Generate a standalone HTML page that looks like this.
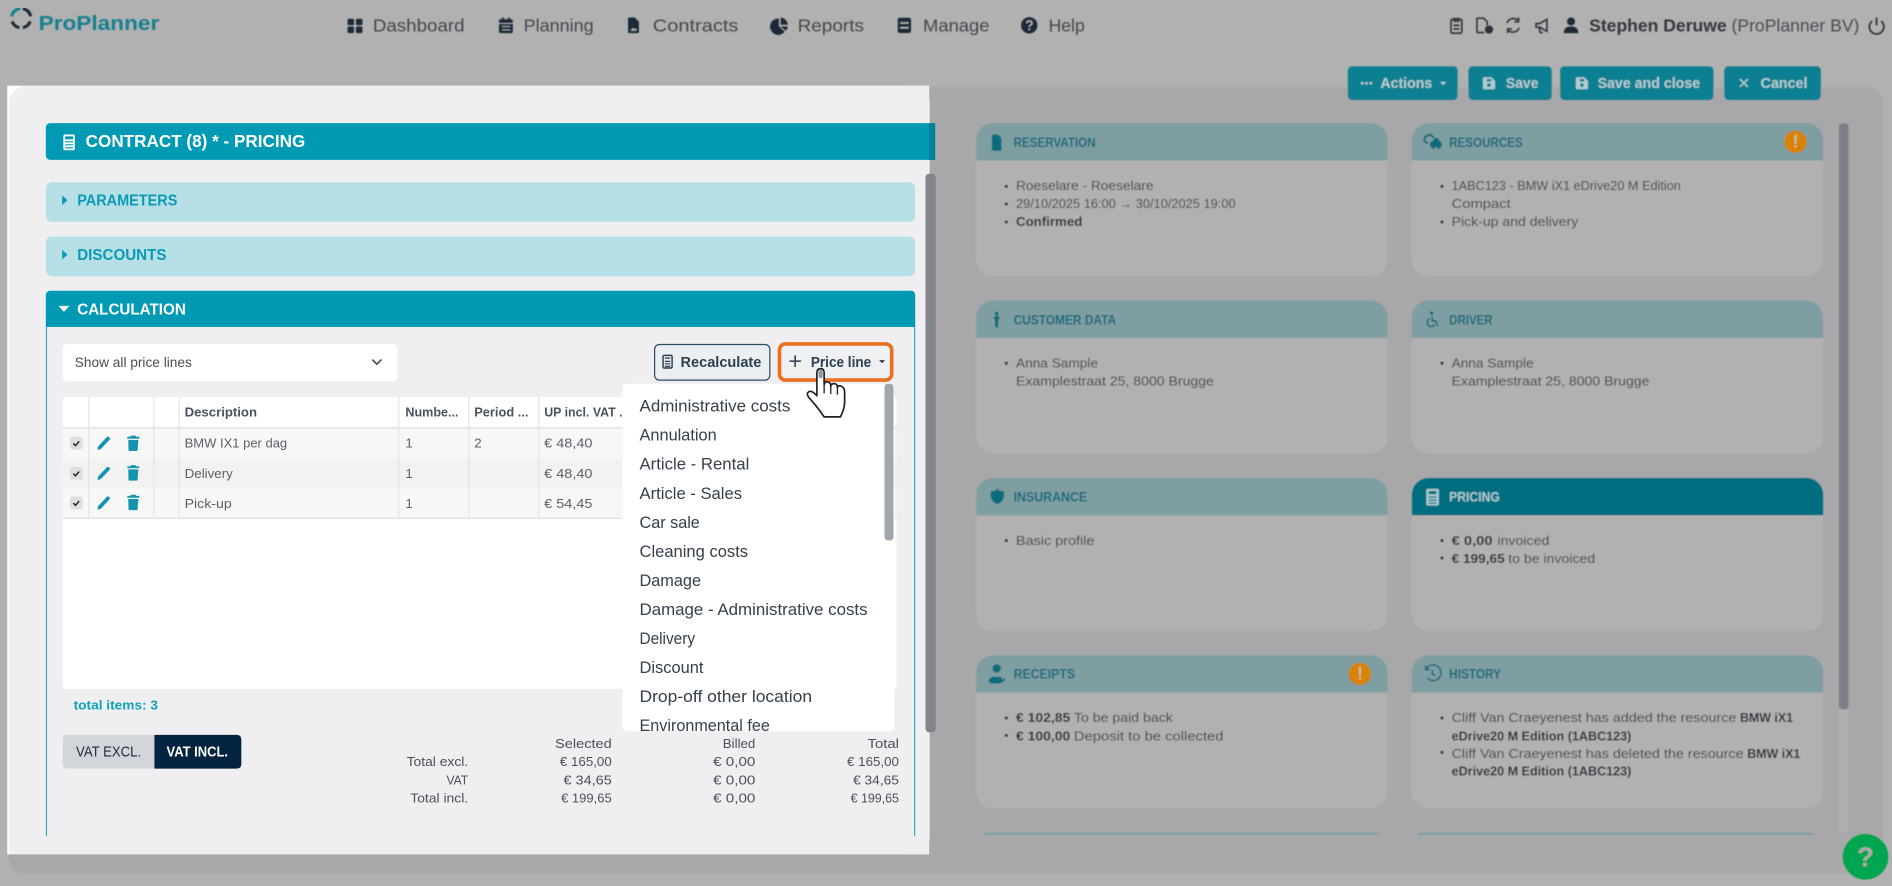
<!DOCTYPE html>
<html><head><meta charset="utf-8"><title>ProPlanner</title>
<style>
html,body{margin:0;padding:0;width:1892px;height:886px;overflow:hidden;background:#b1b1b1}
svg{display:block}
text{font-family:"Liberation Sans","DejaVu Sans",sans-serif;font-size:11px}
.dim{fill:#3f4349}
.dimb{fill:#2c3038;font-weight:700}
.ch{fill:#0f6c7c;font-weight:700;font-size:11.5px}
.bt{fill:#b4ccd1;font-weight:700;font-size:12.5px}
.dd{fill:#36404a;font-size:13.5px}
.th{fill:#4a5460;font-weight:700;font-size:11px}
.td{fill:#5a6068;font-size:11px}
.tt{fill:#4c5058;font-size:11px}
</style></head><body>
<svg xmlns="http://www.w3.org/2000/svg" width="1892" height="886" viewBox="0 0 1568 734.27">
<defs><filter id="bl" x="0" y="0" width="100%" height="100%"><feGaussianBlur stdDeviation="0.35"/></filter></defs>

<rect width="1568" height="735" fill="#b1b1b1"/>

<g filter="url(#bl)">
<!-- content panel -->
<rect x="7" y="72" width="1554" height="652" rx="14" fill="#a8a8aa"/>

<!-- logo -->
<path d="M9.6 13.600A8 8 0 0 1 16.800 7" fill="none" stroke="#0f8093" stroke-width="2.500"/>
<path d="M18.900 7.100A8 8 0 0 1 25.400 13.600" fill="none" stroke="#1d2836" stroke-width="2.500"/>
<path d="M25 17.700A8 8 0 0 1 18.900 22.900M16.100 22.900A8 8 0 0 1 10 17.700" fill="none" stroke="#1d2836" stroke-width="2.500"/>
<text x="32" y="25" textLength="100" lengthAdjust="spacingAndGlyphs" style="font-size:17px;font-weight:700;fill:#13808f">ProPlanner</text>

<!-- nav -->
<g fill="#1f2a38">
<rect x="288" y="15.500" width="5.400" height="5.400" rx="1.200"/><rect x="295" y="15.500" width="5.400" height="5.400" rx="1.200"/><rect x="288" y="22" width="5.400" height="5.400" rx="1.200"/><rect x="295" y="22" width="5.400" height="5.400" rx="1.200"/>
<path d="M413.500 17.500q0-1.500 1.500-1.500h1v-1.500h1.500v1.500h3.500v-1.500h1.500v1.500h1q1.500 0 1.500 1.500v1.500h-11.500zM413.500 20h11.500v6q0 1.500-1.500 1.500h-8.500q-1.500 0-1.500-1.500z"/>
<path d="M520.500 15.500q0-1 1-1h4.500l3.500 3.500v8.500q0 1-1 1h-7q-1 0-1-1z"/>
<path d="M645.500 15.300v6.500l4.800 4.500a6.800 6.800 0 1 1-4.800-11zM647 14.500a6.800 6.800 0 0 1 6 6h-6zM647 22h6a6.800 6.800 0 0 1-1.800 3.500z"/>
<path d="M744 16.500q0-1.800 1.800-1.800h7.400q1.800 0 1.800 1.800v9q0 1.800-1.800 1.800h-7.400q-1.800 0-1.800-1.800z"/>
<circle cx="853" cy="21" r="6.800"/>
</g>
<path d="M416 22h7M416 24.800h7" stroke="#b1b1b1" stroke-width=".8"/>
<path d="M746 19h7M746 23h7" stroke="#b1b1b1" stroke-width="1.400"/>
<path d="M522.500 25.500l2-2.500 1.500 1.300 1.500-.8v2z" fill="#b1b1b1"/>
<path d="M850.800 19.300q.3-1.900 2.300-1.900 2.100 0 2.100 1.800 0 1.100-1.200 1.700-1 .5-1 1.400" fill="none" stroke="#b1b1b1" stroke-width="1.200"/><circle cx="853" cy="24.200" r=".8" fill="#b1b1b1"/>

<text x="309" y="26" textLength="76" lengthAdjust="spacingAndGlyphs" style="font-size:14.500px;fill:#43474e">Dashboard</text>
<text x="434" y="26" textLength="58" lengthAdjust="spacingAndGlyphs" style="font-size:14.500px;fill:#43474e">Planning</text>
<text x="541" y="26" textLength="71" lengthAdjust="spacingAndGlyphs" style="font-size:14.500px;fill:#43474e">Contracts</text>
<text x="661" y="26" textLength="55" lengthAdjust="spacingAndGlyphs" style="font-size:14.500px;fill:#43474e">Reports</text>
<text x="765" y="26" textLength="55" lengthAdjust="spacingAndGlyphs" style="font-size:14.500px;fill:#43474e">Manage</text>
<text x="869" y="26" textLength="30" lengthAdjust="spacingAndGlyphs" style="font-size:14.500px;fill:#43474e">Help</text>

<!-- user icons -->
<g fill="none" stroke="#2e333b" stroke-width="1.300">
<rect x="1202.500" y="16" width="9" height="11.500" rx="1.200"/><path d="M1205 15.500h4v2h-4zM1204.500 21h5M1204.500 24h5"/>
<path d="M1230 27h-5q-1 0-1-1v-10q0-1 1-1h4.500l3 3v3"/>
<path d="M1249 19a5.500 5.500 0 0 1 9.500-1.500M1259 23a5.500 5.500 0 0 1-9.500 1.500"/>
<path d="M1273 19.500h3l6-3.500v10l-6-3.500h-3zM1275.500 23l1 4h2"/>
</g>
<circle cx="1234" cy="24.500" r="3.400" fill="#2e333b"/>
<path d="M1258.500 14.500v3.500h-3.500M1249.500 27.500v-3.500h3.500" fill="none" stroke="#2e333b" stroke-width="1.300"/>
<circle cx="1302" cy="17.800" r="3.300" fill="#1f2a38"/><path d="M1296 27.500q0-5.500 6-5.500t6 5.500z" fill="#1f2a38"/>
<text x="1317" y="26" textLength="114" lengthAdjust="spacingAndGlyphs" style="font-size:14.500px;font-weight:700;fill:#34383f">Stephen Deruwe</text>
<text x="1435" y="26" textLength="106" lengthAdjust="spacingAndGlyphs" style="font-size:14.500px;fill:#4a4e55">(ProPlanner BV)</text>
<path d="M1551.500 17.500a6 6 0 1 0 7.500 0M1555.200 14.500v6.500" fill="none" stroke="#2c3038" stroke-width="1.400"/>

<!-- action buttons -->
<g fill="#077f92">
<rect x="1117" y="55" width="91" height="28" rx="3.500"/><rect x="1217" y="55" width="69" height="28" rx="3.500"/><rect x="1293" y="55" width="127" height="28" rx="3.500"/><rect x="1429" y="55" width="80" height="28" rx="3.500"/>
</g>
<g fill="#b4ccd1">
<circle cx="1129" cy="69" r="1.100"/><circle cx="1132.500" cy="69" r="1.100"/><circle cx="1136" cy="69" r="1.100"/>
<path d="M1193.500 68h5l-2.500 2.500z"/>
<path d="M1229 65q0-1 1-1h6l3 3v6q0 1-1 1h-8q-1 0-1-1z"/>
<path d="M1306 65q0-1 1-1h6l3 3v6q0 1-1 1h-8q-1 0-1-1z"/>
</g>
<rect x="1232" y="65.500" width="4" height="2" fill="#077f92"/><circle cx="1234" cy="70.500" r="1.500" fill="#077f92"/>
<rect x="1309" y="65.500" width="4" height="2" fill="#077f92"/><circle cx="1311" cy="70.500" r="1.500" fill="#077f92"/>
<path d="M1442 65.500l6.500 6.500M1448.500 65.500l-6.500 6.500" stroke="#b4ccd1" stroke-width="1.200"/>
<text class="bt" x="1144" y="73" textLength="43" lengthAdjust="spacingAndGlyphs">Actions</text>
<text class="bt" x="1248" y="73" textLength="27" lengthAdjust="spacingAndGlyphs">Save</text>
<text class="bt" x="1324" y="73" textLength="85" lengthAdjust="spacingAndGlyphs">Save and close</text>
<text class="bt" x="1459" y="73" textLength="39" lengthAdjust="spacingAndGlyphs">Cancel</text>

<!-- cards -->
<g id="cards">
<g fill="#b1b1b2">
<rect x="809" y="102" width="341" height="127" rx="14"/><rect x="1170" y="102" width="341" height="127" rx="14"/>
<rect x="809" y="249" width="341" height="127" rx="14"/><rect x="1170" y="249" width="341" height="127" rx="14"/>
<rect x="809" y="396" width="341" height="127" rx="14"/><rect x="1170" y="396" width="341" height="127" rx="14"/>
<rect x="809" y="543" width="341" height="127" rx="14"/><rect x="1170" y="543" width="341" height="127" rx="14"/>
</g>
<g fill="#7f9ea2">
<path d="M809 133v-17a14 14 0 0 1 14-14h313a14 14 0 0 1 14 14v17z"/>
<path d="M1170 133v-17a14 14 0 0 1 14-14h313a14 14 0 0 1 14 14v17z"/>
<path d="M809 280v-17a14 14 0 0 1 14-14h313a14 14 0 0 1 14 14v17z"/>
<path d="M1170 280v-17a14 14 0 0 1 14-14h313a14 14 0 0 1 14 14v17z"/>
<path d="M809 427v-17a14 14 0 0 1 14-14h313a14 14 0 0 1 14 14v17z"/>
<path d="M809 574v-17a14 14 0 0 1 14-14h313a14 14 0 0 1 14 14v17z"/>
<path d="M1170 574v-17a14 14 0 0 1 14-14h313a14 14 0 0 1 14 14v17z"/>
<rect x="816" y="690" width="327" height="2" rx="1"/><rect x="1175" y="690" width="328" height="2" rx="1"/>
</g>
<path d="M1170 427v-17a14 14 0 0 1 14-14h313a14 14 0 0 1 14 14v17z" fill="#006e80"/>

<!-- card icons -->
<g fill="#0f6c7c">
<path d="M822 112.500q0-1 1-1h4l3 3v9.500q0 1-1 1h-6q-1 0-1-1z"/>
<circle cx="826" cy="259.800" r="1.500"/><path d="M823.300 263.500l2-1.800h1.400l2 1.800-1.400 1.500v6.200h-2.600v-6.200z"/>
<path d="M821 407q5 0 5.500-2.500.5 2.500 5.500 2.500v4q0 4.500-5.500 7-5.500-2.500-5.500-7z"/>
<circle cx="826" cy="554" r="3.500"/><path d="M819 564q2-3 4-3h6q2 0 1 2l-4 .5 5-.5 1.500-1q1 1-1 3l-3 1.500h-8z"/>
<path d="M1187.500 117l1-2.500h3.500l1 2.500q1.800.5 1.800 2v3h-1.800v1.500h-1.800v-1.500h-2.500v1.500h-1.800v-1.500h-1.700v-3q0-1.500 1.800-2z"/>
<circle cx="1186.500" cy="259.300" r="1.400"/>
</g>
<path d="M1180 116.500l1.500-3.500 4 -1.500 2.500 2.500M1180.500 116.500l2.500 2.500" fill="none" stroke="#0f6c7c" stroke-width="1.700"/>
<path d="M1186.700 262l.4 4h2.800l1.600 4.300M1184.800 264.300a3.300 3.300 0 1 0 4.200 4.500" fill="none" stroke="#0f6c7c" stroke-width="1.300"/>
<path d="M1182 554.500a6.500 6.500 0 1 1 1 7.500M1181.500 551.500v3.500h3.500M1187 555v3.500l2.500 1.500" fill="none" stroke="#0f6c7c" stroke-width="1.300"/>
<rect x="1182" y="405" width="10.500" height="14" rx="1.500" fill="#a8c8cf"/><rect x="1184" y="407" width="6.500" height="2.500" fill="#006e80"/>
<path d="M1184 412h6.500M1184 414.500h6.500M1184 417h6.500" stroke="#006e80" stroke-width="1"/>

<text class="ch" x="840" y="122" textLength="68" lengthAdjust="spacingAndGlyphs">RESERVATION</text>
<text class="ch" x="1201" y="122" textLength="61" lengthAdjust="spacingAndGlyphs">RESOURCES</text>
<text class="ch" x="840" y="269" textLength="85" lengthAdjust="spacingAndGlyphs">CUSTOMER DATA</text>
<text class="ch" x="1201" y="269" textLength="36" lengthAdjust="spacingAndGlyphs">DRIVER</text>
<text class="ch" x="840" y="415.500" textLength="61" lengthAdjust="spacingAndGlyphs">INSURANCE</text>
<text class="ch" x="1201" y="415.500" textLength="42" lengthAdjust="spacingAndGlyphs" style="fill:#a8c8cf">PRICING</text>
<text class="ch" x="840" y="562.500" textLength="51" lengthAdjust="spacingAndGlyphs">RECEIPTS</text>
<text class="ch" x="1201" y="562.500" textLength="43" lengthAdjust="spacingAndGlyphs">HISTORY</text>

<!-- warn badges -->
<circle cx="1488" cy="117.500" r="9.200" fill="#d98206"/><rect x="1487.200" y="111.500" width="1.700" height="7.500" fill="#c4c0b0"/><rect x="1487.200" y="120.500" width="1.700" height="1.800" fill="#c4c0b0"/>
<circle cx="1127" cy="558.500" r="9.200" fill="#d98206"/><rect x="1126.200" y="552.500" width="1.700" height="7.500" fill="#c4c0b0"/><rect x="1126.200" y="561.500" width="1.700" height="1.800" fill="#c4c0b0"/>

<!-- bullets -->
<g fill="#2c3038">
<circle cx="834" cy="154.500" r="1.300"/><circle cx="834" cy="169" r="1.300"/><circle cx="834" cy="184" r="1.300"/>
<circle cx="1195" cy="154.500" r="1.300"/><circle cx="1195" cy="184" r="1.300"/>
<circle cx="834" cy="301" r="1.300"/><circle cx="1195" cy="301" r="1.300"/>
<circle cx="834" cy="448" r="1.300"/><circle cx="1195" cy="448" r="1.300"/><circle cx="1195" cy="462.500" r="1.300"/>
<circle cx="834" cy="595" r="1.300"/><circle cx="834" cy="609.500" r="1.300"/><circle cx="1195" cy="595" r="1.300"/><circle cx="1195" cy="623.500" r="1.300"/>
</g>
<text class="dim" x="842" y="157.500" textLength="114" lengthAdjust="spacingAndGlyphs">Roeselare - Roeselare</text>
<text class="dim" x="842" y="172.500" textLength="182" lengthAdjust="spacingAndGlyphs">29/10/2025 16:00 → 30/10/2025 19:00</text>
<text class="dimb" x="842" y="187.500" textLength="55" lengthAdjust="spacingAndGlyphs">Confirmed</text>
<text class="dim" x="1203" y="157.500" textLength="190" lengthAdjust="spacingAndGlyphs">1ABC123 - BMW iX1 eDrive20 M Edition</text>
<text class="dim" x="1203" y="172.500" textLength="49" lengthAdjust="spacingAndGlyphs">Compact</text>
<text class="dim" x="1203" y="187.500" textLength="105" lengthAdjust="spacingAndGlyphs">Pick-up and delivery</text>
<text class="dim" x="842" y="304.500" textLength="68" lengthAdjust="spacingAndGlyphs">Anna Sample</text>
<text class="dim" x="842" y="319.500" textLength="164" lengthAdjust="spacingAndGlyphs">Examplestraat 25, 8000 Brugge</text>
<text class="dim" x="1203" y="304.500" textLength="68" lengthAdjust="spacingAndGlyphs">Anna Sample</text>
<text class="dim" x="1203" y="319.500" textLength="164" lengthAdjust="spacingAndGlyphs">Examplestraat 25, 8000 Brugge</text>
<text class="dim" x="842" y="451.500" textLength="65" lengthAdjust="spacingAndGlyphs">Basic profile</text>
<text class="dimb" x="1203" y="451.500" textLength="34" lengthAdjust="spacingAndGlyphs">€ 0,00</text>
<text class="dim" x="1241" y="451.500" textLength="43" lengthAdjust="spacingAndGlyphs">invoiced</text>
<text class="dimb" x="1203" y="466.500" textLength="44" lengthAdjust="spacingAndGlyphs">€ 199,65</text>
<text class="dim" x="1250" y="466.500" textLength="72" lengthAdjust="spacingAndGlyphs">to be invoiced</text>
<text class="dimb" x="842" y="598.500" textLength="45" lengthAdjust="spacingAndGlyphs">€ 102,85</text>
<text class="dim" x="890" y="598.500" textLength="82" lengthAdjust="spacingAndGlyphs">To be paid back</text>
<text class="dimb" x="842" y="613.500" textLength="45" lengthAdjust="spacingAndGlyphs">€ 100,00</text>
<text class="dim" x="890" y="613.500" textLength="124" lengthAdjust="spacingAndGlyphs">Deposit to be collected</text>
<text class="dim" x="1203" y="598.500" textLength="236" lengthAdjust="spacingAndGlyphs">Cliff Van Craeyenest has added the resource</text>
<text class="dimb" x="1442" y="598.500" textLength="44" lengthAdjust="spacingAndGlyphs">BMW iX1</text>
<text class="dimb" x="1203" y="613.500" textLength="149" lengthAdjust="spacingAndGlyphs">eDrive20 M Edition (1ABC123)</text>
<text class="dim" x="1203" y="628" textLength="242" lengthAdjust="spacingAndGlyphs">Cliff Van Craeyenest has deleted the resource</text>
<text class="dimb" x="1448" y="628" textLength="44" lengthAdjust="spacingAndGlyphs">BMW iX1</text>
<text class="dimb" x="1203" y="642.500" textLength="149" lengthAdjust="spacingAndGlyphs">eDrive20 M Edition (1ABC123)</text>
</g>

<!-- page scrollbar -->
<rect x="1524" y="102" width="8" height="588" rx="3" fill="#b0b0b2"/>
<rect x="1524" y="102" width="8" height="486" rx="3" fill="#7d7f88"/>

<!-- help -->
<circle cx="1546" cy="710" r="19" fill="#03a550"/>
<text x="1546" y="718" text-anchor="middle" style="font-size:23px;font-weight:700;fill:#a9aca8">?</text>
</g>

<!-- modal -->
<rect x="6" y="71" width="764" height="637" fill="#fff"/>
<rect x="7.500" y="71.500" width="763" height="636" rx="14" fill="#efeff1"/>
<rect x="750" y="71" width="20" height="20" fill="#efeff1"/><rect x="750" y="690" width="20" height="18" fill="#efeff1"/>
<rect x="7.500" y="690" width="20" height="17.500" fill="#efeff1"/>

<!-- modal scrollbar -->
<rect x="767" y="144" width="8.500" height="463" rx="3" fill="#83858d"/>

<!-- contract bar -->
<path d="M38 106q0-4 4-4H775v30.500H42q-4 0-4-4z" fill="#009ab5"/>
<rect x="770" y="102" width="5" height="30.500" fill="#008299"/>
<rect x="52.500" y="111.500" width="9.500" height="13" rx="1.200" fill="#fff"/><rect x="54" y="113" width="6.500" height="2.500" fill="#009ab5"/>
<path d="M54 117.500h6.500M54 120h6.500M54 122.500h6.500" stroke="#009ab5" stroke-width=".9"/>
<text x="71" y="122" textLength="182" lengthAdjust="spacingAndGlyphs" style="font-size:14.500px;font-weight:700;fill:#fff">CONTRACT (8) * - PRICING</text>

<rect x="38" y="151" width="720.500" height="33" rx="5" fill="#b6e0e6"/>
<path d="M51.500 162l4.500 4-4.500 4z" fill="#0a9ab5"/>
<text x="64" y="170.500" textLength="83" lengthAdjust="spacingAndGlyphs" style="font-size:13px;font-weight:700;fill:#0a9ab5">PARAMETERS</text>
<rect x="38" y="196" width="720.500" height="33" rx="5" fill="#b6e0e6"/>
<path d="M51.500 207l4.500 4-4.500 4z" fill="#0a9ab5"/>
<text x="64" y="215.500" textLength="74" lengthAdjust="spacingAndGlyphs" style="font-size:13px;font-weight:700;fill:#0a9ab5">DISCOUNTS</text>

<path d="M38.500 693V271M758 271V693" fill="none" stroke="#3aa9bf" stroke-width="1"/>
<path d="M38 271v-26q0-4 4-4h712.500q4 0 4 4v26z" fill="#009ab5"/>
<path d="M48.500 253.500h9l-4.500 5z" fill="#fff"/>
<text x="64" y="260.500" textLength="90" lengthAdjust="spacingAndGlyphs" style="font-size:13px;font-weight:700;fill:#fff">CALCULATION</text>

<!-- select -->
<rect x="52" y="285" width="277.500" height="31" rx="4" fill="#fff"/>
<text x="62" y="304" textLength="97" lengthAdjust="spacingAndGlyphs" style="font-size:11.500px;fill:#4a4e55">Show all price lines</text>
<path d="M308.500 298l3.800 3.800 3.800-3.800" fill="none" stroke="#444" stroke-width="1.300"/>

<!-- recalc -->
<rect x="542.500" y="285.500" width="95.500" height="29.500" rx="4" fill="#eceff2" stroke="#2d4a5e" stroke-width="1"/>
<rect x="549.500" y="294.500" width="7.500" height="10.500" rx="1" fill="none" stroke="#2c3e50" stroke-width="1.200"/>
<path d="M551 296.800h4.500M551 299.500h4.500M551 301.500h4.500M551 303.500h4.500" stroke="#2c3e50" stroke-width="1"/>
<text x="564" y="304" textLength="67" lengthAdjust="spacingAndGlyphs" style="font-size:12px;font-weight:700;fill:#2c3e50">Recalculate</text>

<!-- table -->
<rect x="52" y="329" width="691" height="242" rx="2" fill="#fff"/>
<rect x="52" y="355" width="691" height="25" fill="#f7f7f7"/>
<rect x="52" y="380" width="691" height="25" fill="#f2f2f2"/>
<rect x="52" y="405" width="691" height="24" fill="#f7f7f7"/>
<path d="M52 354.500H743M52 429.500H743" stroke="#e6e6e6" stroke-width="1.500"/>
<path d="M73.500 329V429M127.500 329V429M148.500 329V429M330.500 329V429M388.500 329V429M446.500 329V429" stroke="#e4e4e4" stroke-width="1"/>
<text class="th" x="153" y="345" textLength="60" lengthAdjust="spacingAndGlyphs">Description</text>
<text class="th" x="336" y="345" textLength="44" lengthAdjust="spacingAndGlyphs">Numbe...</text>
<text class="th" x="393" y="345" textLength="45" lengthAdjust="spacingAndGlyphs">Period ...</text>
<text class="th" x="451" y="345" textLength="65" lengthAdjust="spacingAndGlyphs">UP incl. VAT .</text>
<rect x="58" y="362" width="10.500" height="10.500" rx="2" fill="#dedede"/><rect x="58" y="387" width="10.500" height="10.500" rx="2" fill="#dedede"/><rect x="58" y="411.500" width="10.500" height="10.500" rx="2" fill="#dedede"/>
<path d="M60.800 367.500l1.800 1.800 3-3.500M60.800 392.500l1.800 1.800 3-3.500M60.800 417l1.800 1.800 3-3.500" fill="none" stroke="#222" stroke-width="1.200"/>
<g fill="#1493ad">
<path d="M80.800 373l.6-3.200 7.200-7.600q.8-.8 1.500-.1l.8.800q.7.700-.1 1.500l-7.200 7.600z"/>
<path d="M80.800 398l.6-3.200 7.200-7.600q.8-.8 1.500-.1l.8.800q.7.700-.1 1.500l-7.200 7.600z"/>
<path d="M80.800 422.500l.6-3.200 7.200-7.600q.8-.8 1.500-.1l.8.800q.7.700-.1 1.500l-7.200 7.600z"/>
<path d="M105.500 362h2.500l.8-1h3.400l.8 1h2.500v1.500h-10zM106.300 364.500h8.400l-.7 8.500q0 .8-.8.800h-5.900q-.7 0-.8-.8z"/>
<path d="M105.500 386.500h2.500l.8-1h3.400l.8 1h2.500v1.500h-10zM106.300 389h8.400l-.7 8.500q0 .8-.8.800h-5.900q-.7 0-.8-.8z"/>
<path d="M105.500 411h2.500l.8-1h3.400l.8 1h2.500v1.500h-10zM106.300 413.500h8.400l-.7 8.500q0 .8-.8.800h-5.900q-.7 0-.8-.8z"/>
</g>
<text class="td" x="153" y="371" textLength="85" lengthAdjust="spacingAndGlyphs">BMW IX1 per dag</text>
<text class="td" x="153" y="396" textLength="40" lengthAdjust="spacingAndGlyphs">Delivery</text>
<text class="td" x="153" y="421" textLength="39" lengthAdjust="spacingAndGlyphs">Pick-up</text>
<text class="td" x="336" y="371">1</text><text class="td" x="336" y="396">1</text><text class="td" x="336" y="421">1</text>
<text class="td" x="393" y="371">2</text>
<text class="td" x="451" y="371" textLength="40" lengthAdjust="spacingAndGlyphs">€ 48,40</text>
<text class="td" x="451" y="396" textLength="40" lengthAdjust="spacingAndGlyphs">€ 48,40</text>
<text class="td" x="451" y="421" textLength="40" lengthAdjust="spacingAndGlyphs">€ 54,45</text>

<text x="61" y="588" textLength="70" lengthAdjust="spacingAndGlyphs" style="font-size:11px;font-weight:700;fill:#0fa3bc">total items: 3</text>

<!-- vat toggle -->
<path d="M128 609H56q-4 0-4 4v20q0 4 4 4h72z" fill="#d2d6da"/>
<path d="M128 609h68q4 0 4 4v20q0 4-4 4h-68z" fill="#03233f"/>
<text x="63" y="627" textLength="54" lengthAdjust="spacingAndGlyphs" style="font-size:12px;fill:#1f2a38">VAT EXCL.</text>
<text x="138" y="627" textLength="51" lengthAdjust="spacingAndGlyphs" style="font-size:12px;font-weight:700;fill:#fff">VAT INCL.</text>

<!-- totals -->
<text class="tt" x="460" y="620" textLength="47" lengthAdjust="spacingAndGlyphs">Selected</text>
<text class="tt" x="599" y="620" textLength="27" lengthAdjust="spacingAndGlyphs">Billed</text>
<text class="tt" x="719" y="620" textLength="26" lengthAdjust="spacingAndGlyphs">Total</text>
<text class="tt" x="337" y="635" textLength="51" lengthAdjust="spacingAndGlyphs">Total excl.</text>
<text class="tt" x="370" y="650" textLength="18" lengthAdjust="spacingAndGlyphs">VAT</text>
<text class="tt" x="340" y="665" textLength="48" lengthAdjust="spacingAndGlyphs">Total incl.</text>
<text class="tt" x="464" y="635" textLength="43" lengthAdjust="spacingAndGlyphs">€ 165,00</text>
<text class="tt" x="467" y="650" textLength="40" lengthAdjust="spacingAndGlyphs">€ 34,65</text>
<text class="tt" x="465" y="665" textLength="42" lengthAdjust="spacingAndGlyphs">€ 199,65</text>
<text class="tt" x="591" y="635" textLength="35" lengthAdjust="spacingAndGlyphs">€ 0,00</text>
<text class="tt" x="591" y="650" textLength="35" lengthAdjust="spacingAndGlyphs">€ 0,00</text>
<text class="tt" x="591" y="665" textLength="35" lengthAdjust="spacingAndGlyphs">€ 0,00</text>
<text class="tt" x="702" y="635" textLength="43" lengthAdjust="spacingAndGlyphs">€ 165,00</text>
<text class="tt" x="707" y="650" textLength="38" lengthAdjust="spacingAndGlyphs">€ 34,65</text>
<text class="tt" x="705" y="665" textLength="40" lengthAdjust="spacingAndGlyphs">€ 199,65</text>

<!-- dropdown -->
<rect x="516" y="318" width="225" height="288" rx="3" fill="#fff"/>
<text class="dd" x="530" y="341" textLength="125" lengthAdjust="spacingAndGlyphs">Administrative costs</text>
<text class="dd" x="530" y="365" textLength="64" lengthAdjust="spacingAndGlyphs">Annulation</text>
<text class="dd" x="530" y="389" textLength="91" lengthAdjust="spacingAndGlyphs">Article - Rental</text>
<text class="dd" x="530" y="413.500" textLength="85" lengthAdjust="spacingAndGlyphs">Article - Sales</text>
<text class="dd" x="530" y="437.500" textLength="50" lengthAdjust="spacingAndGlyphs">Car sale</text>
<text class="dd" x="530" y="461.500" textLength="90" lengthAdjust="spacingAndGlyphs">Cleaning costs</text>
<text class="dd" x="530" y="485.500" textLength="51" lengthAdjust="spacingAndGlyphs">Damage</text>
<text class="dd" x="530" y="509.700" textLength="189" lengthAdjust="spacingAndGlyphs">Damage - Administrative costs</text>
<text class="dd" x="530" y="533.700" textLength="46" lengthAdjust="spacingAndGlyphs">Delivery</text>
<text class="dd" x="530" y="557.800" textLength="53" lengthAdjust="spacingAndGlyphs">Discount</text>
<text class="dd" x="530" y="581.800" textLength="143" lengthAdjust="spacingAndGlyphs">Drop-off other location</text>
<svg x="516" y="590" width="225" height="16" viewBox="516 590 225 16"><text class="dd" x="530" y="606" textLength="108" lengthAdjust="spacingAndGlyphs">Environmental fee</text></svg>
<rect x="733" y="318" width="7.500" height="130" rx="3" fill="#a2a6ad"/>

<!-- price line button -->
<rect x="646" y="285" width="93" height="30" rx="5" fill="#eef0f2" stroke="#e8701e" stroke-width="3"/>
<path d="M659 294.500v9.500M654.300 299.300h9.500" stroke="#2c3e50" stroke-width="1.300"/>
<text x="672" y="304" textLength="50" lengthAdjust="spacingAndGlyphs" style="font-size:12px;font-weight:700;fill:#2c3e50">Price line</text>
<path d="M728.500 298.500h5l-2.500 2.500z" fill="#2c3e50"/>

<!-- hand cursor -->
<path d="M677 327V309Q677 305.500 680 305.500Q683 305.500 683 309V319Q683.500 316 686 316.500Q688.500 317 688.500 320Q689 317.500 692 318Q694 318.500 694 321Q695 319 697 320Q700 321 700 325V333Q700 339 696.500 345.500H683Q680 341 676 336L670 329Q668 326 670.500 324.500Q673 323.500 677 328Z" fill="#fff" stroke="#222" stroke-width="1.400" stroke-linejoin="round"/>
<path d="M683 319V326M688.500 320V326.500M694 321V327" stroke="#222" stroke-width="1.100" fill="none"/>
<rect x="678.300" y="306.500" width="3.500" height="7" rx="1.700" fill="#8b98a3"/>
</svg>
</body></html>
